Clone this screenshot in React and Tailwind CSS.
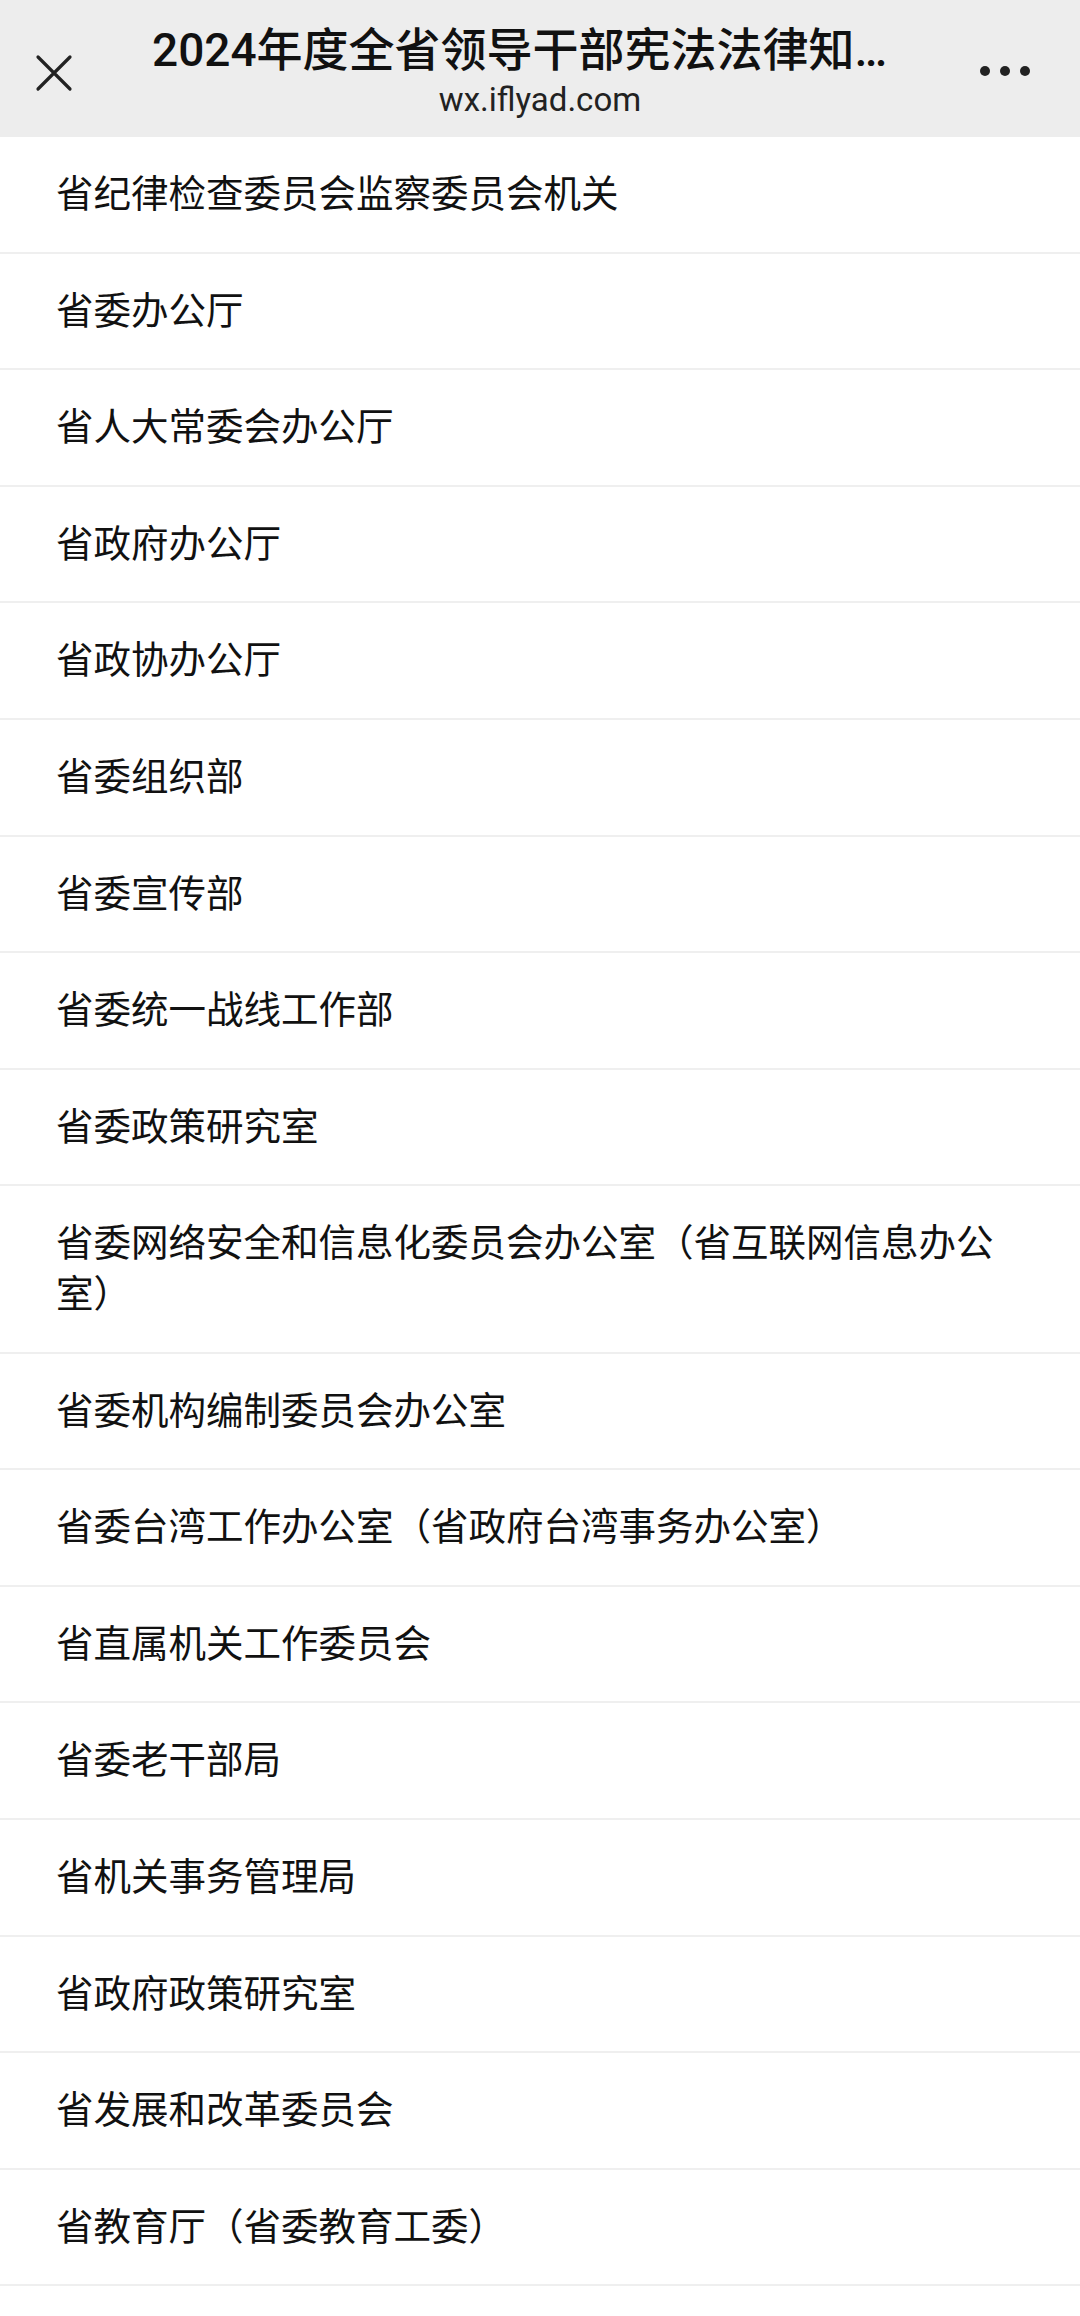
const units = [
  '省纪律检查委员会监察委员会机关',
  '省委办公厅',
  '省人大常委会办公厅',
  '省政府办公厅',
  '省政协办公厅',
  '省委组织部',
  '省委宣传部',
  '省委统一战线工作部',
  '省委政策研究室',
  '省委网络安全和信息化委员会办公室（省互联网信息办公室）',
  '省委机构编制委员会办公室',
  '省委台湾工作办公室（省政府台湾事务办公室）',
  '省直属机关工作委员会',
  '省委老干部局',
  '省机关事务管理局',
  '省政府政策研究室',
  '省发展和改革委员会',
  '省教育厅（省委教育工委）',
];

const font = { fontFamily: 'Roboto, "Noto Sans CJK SC", sans-serif' };

function Header() {
  return (
    <div className="relative h-[137px] bg-[#ededed] flex flex-col items-center">
      <button className="absolute left-[33px] top-[52px] w-[42px] h-[42px] flex items-center justify-center">
        <svg width="38" height="38" viewBox="0 0 38 38" fill="none">
          <path d="M3 3L35 35M35 3L3 35" stroke="#222" strokeWidth="3.2" strokeLinecap="round" />
        </svg>
      </button>
      <div className="w-full pl-[152px] pr-[192px] pt-[22px]">
        <h1 className="truncate text-[46px] leading-[56px] font-medium text-[#111] text-center">
          2024年度全省领导干部宪法法律知识考试参考单位名单
        </h1>
      </div>
      <p className="text-[33px] leading-[40px] text-[#222] mt-[2px]">wx.iflyad.com</p>
      <div className="absolute left-[980px] top-[66px] flex gap-[10px]">
        <span className="w-[10px] h-[10px] rounded-full bg-[#222]" />
        <span className="w-[10px] h-[10px] rounded-full bg-[#222]" />
        <span className="w-[10px] h-[10px] rounded-full bg-[#222]" />
      </div>
    </div>
  );
}

export default function App() {
  return (
    <div className="min-h-screen bg-white" style={font}>
      <Header />
      <ul>
        {units.map((name) => (
          <li
            key={name}
            className="pl-[56px] pr-[56px] py-[32px] border-b-2 border-[#efefef] text-[37.5px] leading-[50.6px] text-[#111]"
          >
            {name}
          </li>
        ))}
      </ul>
    </div>
  );
}
